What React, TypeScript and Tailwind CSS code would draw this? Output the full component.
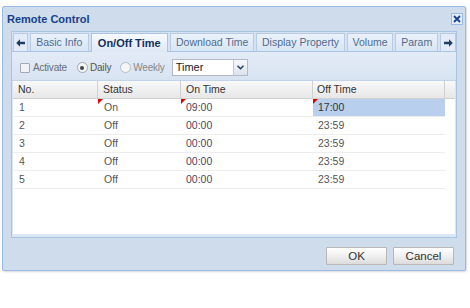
import React from "react";

const tabs = [
  { label: "Basic Info", w: "w-[59px]" },
  { label: "On/Off Time", w: "w-[78px]", active: true },
  { label: "Download Time", w: "w-[85px]" },
  { label: "Display Property", w: "w-[89px]" },
  { label: "Volume", w: "w-[47px]" },
  { label: "Param", w: "w-[43px]" },
];

const rows = [
  { no: "1", status: "On", on: "09:00", off: "17:00", dirty: true },
  { no: "2", status: "Off", on: "00:00", off: "23:59" },
  { no: "3", status: "Off", on: "00:00", off: "23:59" },
  { no: "4", status: "Off", on: "00:00", off: "23:59" },
  { no: "5", status: "Off", on: "00:00", off: "23:59" },
];

function Dirty() {
  return (
    <span className="absolute left-0 top-0 w-0 h-0 border-t-[5px] border-t-[#e00000] border-r-[5px] border-r-transparent" />
  );
}

function Arrow({ dir }: { dir: "left" | "right" }) {
  return (
    <svg width="9" height="8" viewBox="0 0 9 8" className={dir === "left" ? "rotate-180" : ""}>
      <path d="M0 2.8h5V0.3L8.8 4 5 7.7V5.2H0z" fill="#1f3c66" />
    </svg>
  );
}

export default function App() {
  return (
    <div className="w-[470px] h-[308px] bg-white pt-[6px] pl-[2px] font-['Liberation_Sans',Arial,sans-serif]">
      <div className="w-[464px] h-[265px] border border-[#99bbe8] bg-[#cfdcec] rounded-[2px] flex flex-col shadow-[1px_1px_2px_rgba(0,0,0,0.15)]">
        {/* header */}
        <div className="h-[24px] flex items-center justify-between pl-[4px] pr-[2px]">
          <span className="text-[11px] font-bold text-[#15428b]">Remote Control</span>
          <span className="w-[12px] h-[12px] border border-[#99bbe8] bg-[#e4ecf7] flex items-center justify-center">
            <svg width="8" height="8" viewBox="0 0 8 8">
              <path d="M1 1l6 6M7 1L1 7" stroke="#15428b" strokeWidth="1.8" />
            </svg>
          </span>
        </div>

        {/* panel */}
        <div className="mx-[8px] h-[207px] border border-[#a9c3e3] bg-[#dbe6f4] flex flex-col">
          {/* tabs */}
          <div className="h-[20px] shrink-0 flex items-end gap-[2px] pl-[1px] border-b border-[#a9c3e3] bg-[#d6e2f1]">
            <div className="w-[15px] h-[18px] border border-b-0 border-[#b5cbe6] bg-[#e2ebf7] flex items-center justify-center">
              <Arrow dir="left" />
            </div>
            {tabs.map((t) =>
              t.active ? (
                <div
                  key={t.label}
                  className={`${t.w} h-[19px] -mb-px border border-b-0 border-[#a9c3e3] bg-gradient-to-b from-[#f7faff] to-[#dfe8f5] flex items-center justify-center text-[11px] font-bold text-[#15305a]`}
                >
                  {t.label}
                </div>
              ) : (
                <div
                  key={t.label}
                  className={`${t.w} h-[18px] border border-b-0 border-[#b5cbe6] bg-gradient-to-b from-[#eaf1fb] to-[#d9e5f3] flex items-center justify-center text-[10.5px] text-[#4f6b90]`}
                >
                  {t.label}
                </div>
              )
            )}
            <div className="w-[16px] h-[18px] border border-b-0 border-[#b5cbe6] bg-[#e2ebf7] flex items-center justify-center">
              <Arrow dir="right" />
            </div>
          </div>

          {/* toolbar */}
          <div className="h-[29px] shrink-0 flex items-center pt-[3px] pl-[8px] text-[10px] tracking-[-0.2px] text-[#6a6f78] bg-gradient-to-b from-[#e3ebf6] to-[#d8e3f2] border-b border-[#c3d4ea]">
            <span className="w-[10px] h-[10px] border border-[#a4a9b1] bg-[#f1f2f4] rounded-[1px]" />
            <span className="ml-[3px]">Activate</span>
            <span className="ml-[10px] w-[11px] h-[11px] rounded-full border border-[#a4a9b1] bg-[#f4f5f7] flex items-center justify-center">
              <span className="w-[4px] h-[4px] rounded-full bg-[#444]" />
            </span>
            <span className="ml-[2px] text-[#555]">Daily</span>
            <span className="ml-[9px] w-[11px] h-[11px] rounded-full border border-[#b8bcc3] bg-[#f4f5f7]" />
            <span className="ml-[2px] text-[#888]">Weekly</span>
            <div className="ml-[7px] w-[76px] h-[17px] border border-[#b5b8c8] bg-white flex tracking-normal">
              <span className="flex-1 pl-[3px] text-[11px] leading-[15px] text-[#222]">Timer</span>
              <span className="w-[14px] border-l border-[#c4c9d4] bg-gradient-to-b from-[#f6f8fb] to-[#dde3ec] flex items-center justify-center">
                <svg width="7" height="5" viewBox="0 0 7 5">
                  <path d="M0.5 0.8L3.5 3.8 6.5 0.8" stroke="#1f3c66" strokeWidth="1.5" fill="none" />
                </svg>
              </span>
            </div>
          </div>

          {/* grid */}
          <div className="flex-1 mx-[1px] mb-[3px] bg-white flex flex-col text-[10.5px] text-[#555]">
            <div className="h-[18px] shrink-0 flex bg-gradient-to-b from-[#f9f9f9] to-[#e7e7e7] border-b border-[#d0d0d0] text-[#333]">
              <div className="w-[85px] pl-[5px] flex items-center border-r border-[#d0d0d0]">No.</div>
              <div className="w-[83px] pl-[5px] flex items-center border-r border-[#d0d0d0]">Status</div>
              <div className="w-[132px] pl-[5px] flex items-center border-r border-[#d0d0d0]">On Time</div>
              <div className="w-[132px] pl-[4px] flex items-center border-r border-[#d0d0d0]">Off Time</div>
              <div className="flex-1" />
            </div>
            {rows.map((r) => (
              <div key={r.no} className="w-[432px] h-[18px] shrink-0 flex border-b border-[#ededed]">
                <div className="w-[85px] pl-[6px] flex items-center">{r.no}</div>
                <div className="relative w-[83px] pl-[6px] flex items-center">
                  {r.dirty && <Dirty />}
                  {r.status}
                </div>
                <div className="relative w-[132px] pl-[5px] flex items-center text-[#4d4660]">
                  {r.dirty && <Dirty />}
                  {r.on}
                </div>
                <div
                  className={`relative w-[132px] pl-[5px] flex items-center ${
                    r.dirty ? "bg-[#b9cfee] text-[#333]" : ""
                  }`}
                >
                  {r.dirty && <Dirty />}
                  {r.off}
                </div>
              </div>
            ))}
          </div>
        </div>

        {/* footer */}
        <div className="flex-1 flex justify-end items-start pt-[9px] pr-[11px] gap-[6px]">
          <button className="w-[61px] h-[18px] border border-[#b8b8b8] bg-gradient-to-b from-[#ffffff] via-[#f0f0f0] to-[#dcdcdc] text-[11.5px] text-[#333] rounded-[1px]">
            OK
          </button>
          <button className="w-[61px] h-[18px] border border-[#b8b8b8] bg-gradient-to-b from-[#ffffff] via-[#f0f0f0] to-[#dcdcdc] text-[11.5px] text-[#333] rounded-[1px]">
            Cancel
          </button>
        </div>
      </div>
    </div>
  );
}
